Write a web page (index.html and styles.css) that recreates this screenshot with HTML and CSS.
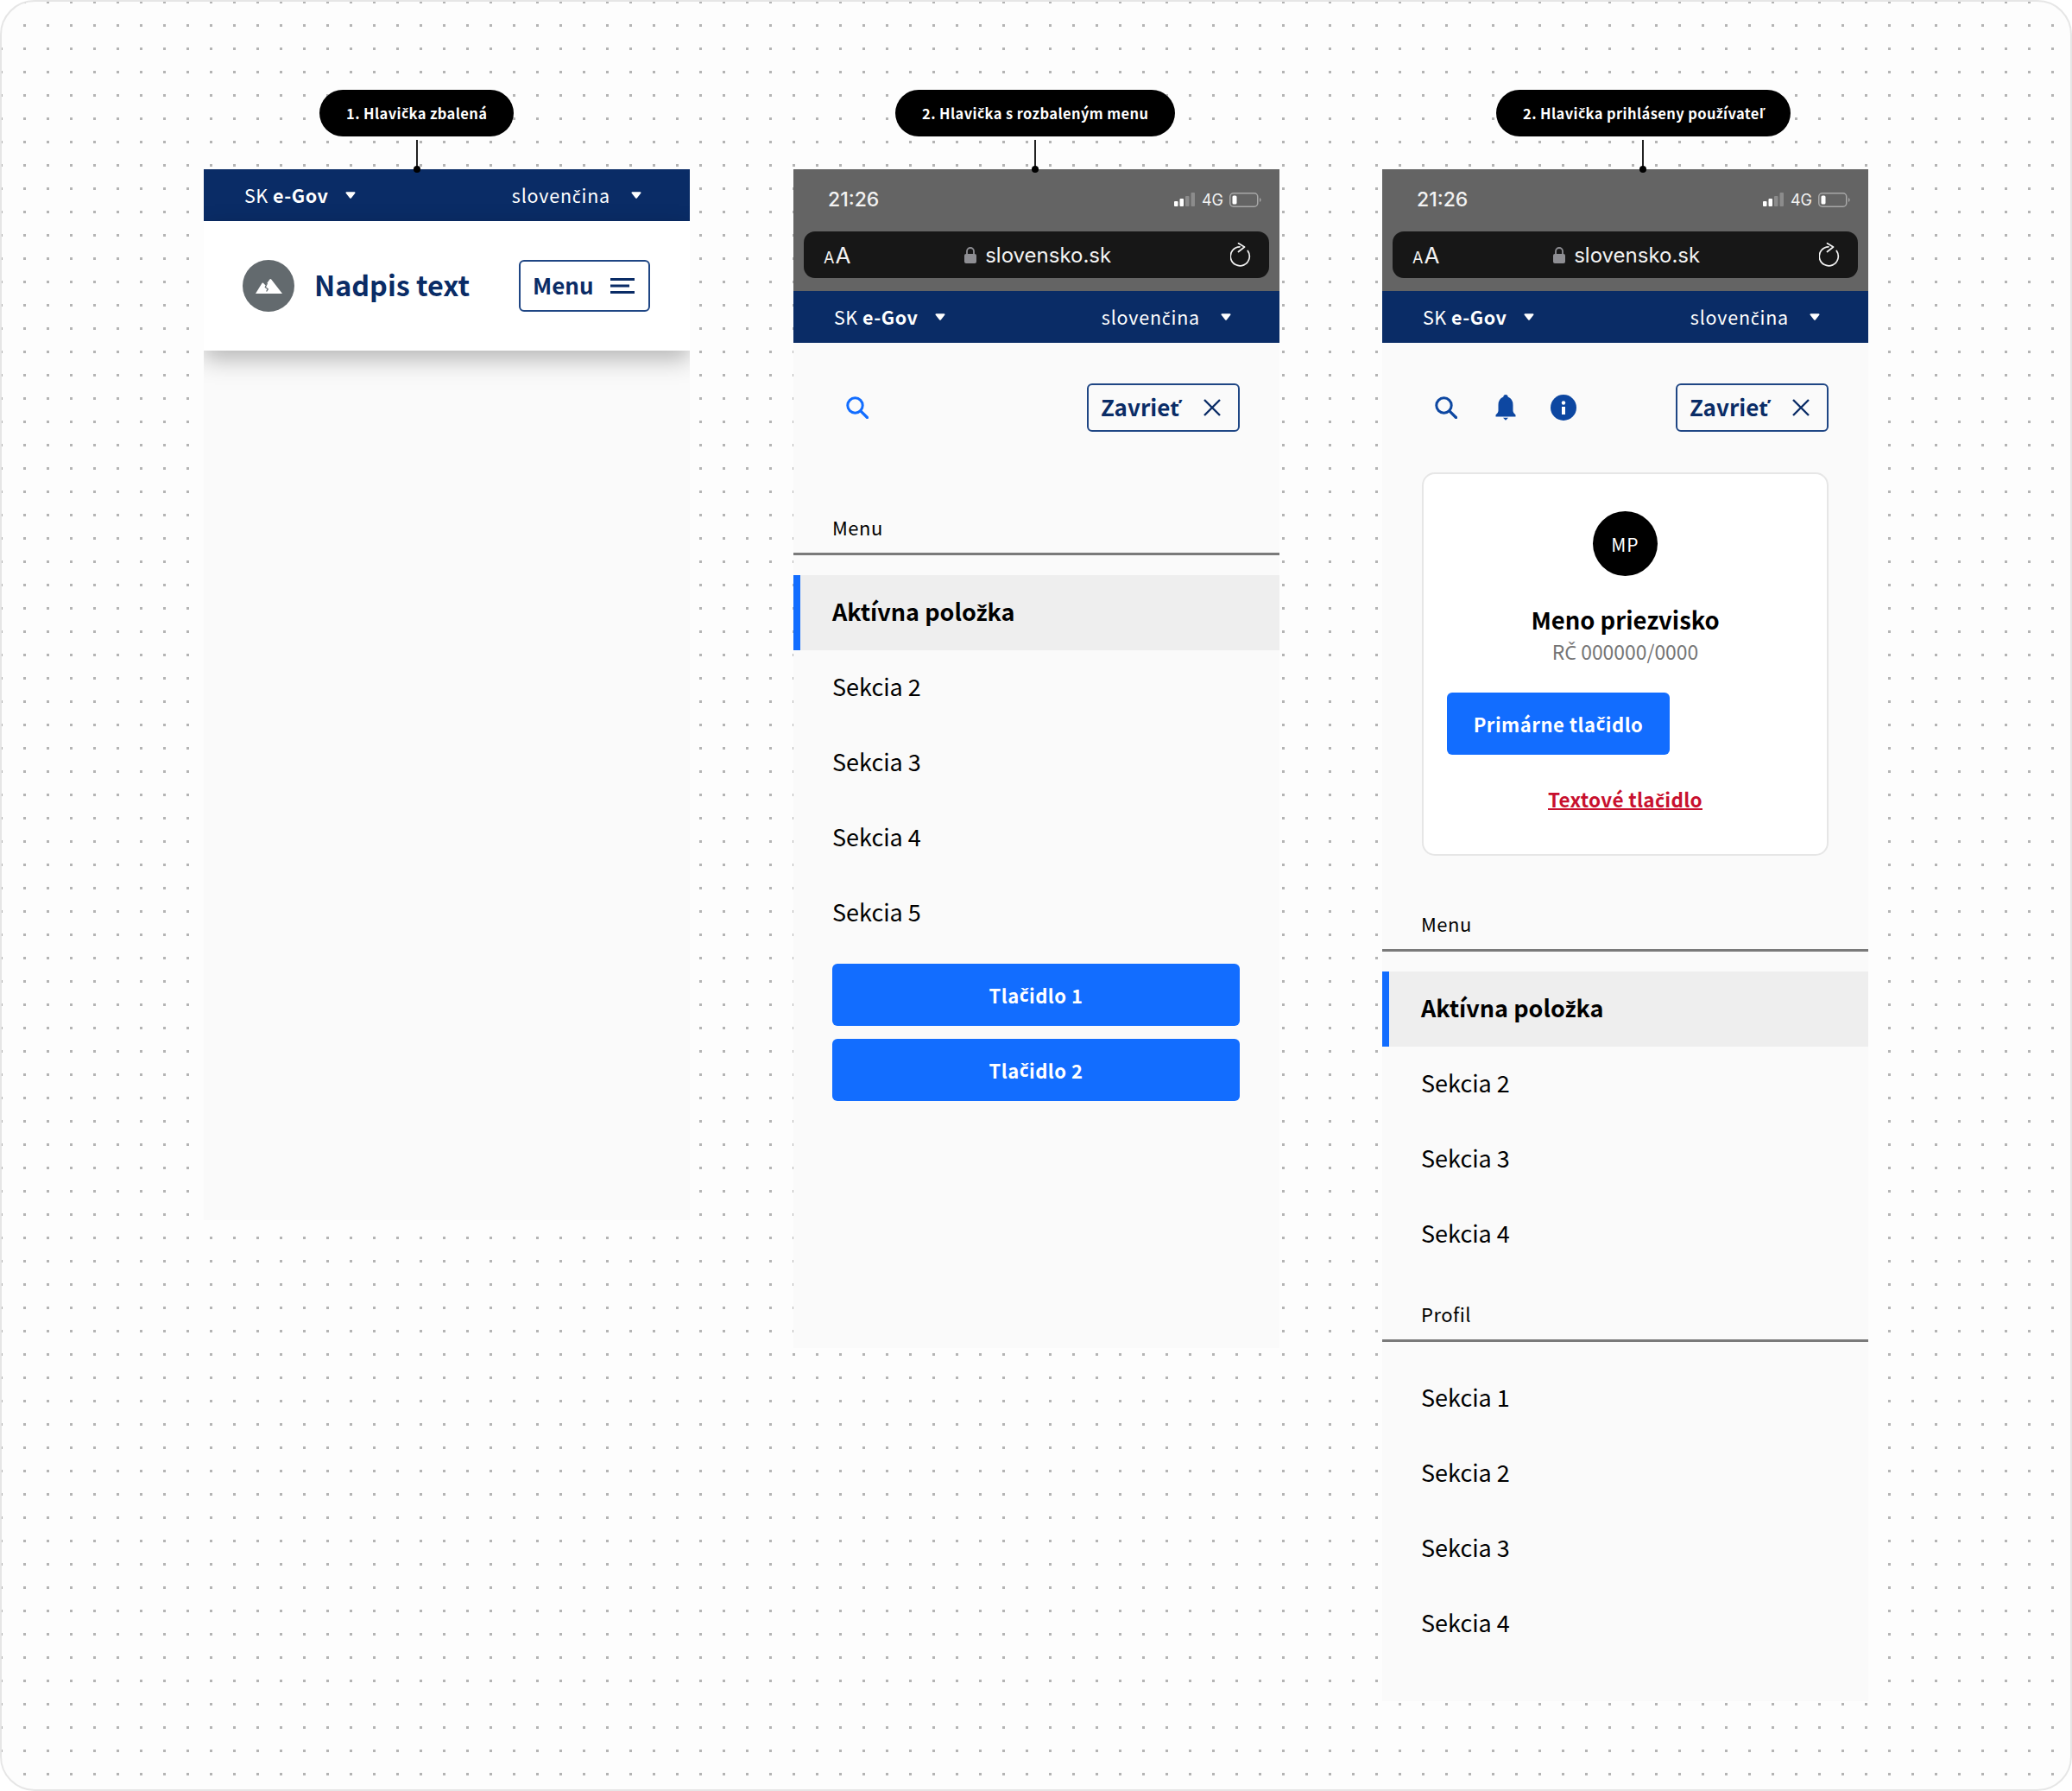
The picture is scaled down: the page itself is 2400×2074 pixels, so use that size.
FILE: index.html
```html
<!DOCTYPE html>
<html lang="sk">
<head>
  <meta charset="UTF-8">
  <title>Hlavička</title>
  <link rel="stylesheet" href="styles.css">
</head>
<body>
  <div class="board">

    <!-- 1. collapsed header -->
    <section class="column">
      <div class="callout callout-first">
        <div class="pill">1. Hlavi<span class="dia">č</span>ka zbalená</div>
        <div class="stem"></div>
      </div>
      <div class="panel panel-first">
        <div class="bar">
          <div class="bar-item"><span>SK <b>e-Gov</b></span><svg class="caret" viewBox="0 0 12 8"><path d="M1.500 1.200h9L6 6.800z" fill="#fff" stroke="#fff" stroke-width="2" stroke-linejoin="round"/></svg></div>
          <div class="bar-item"><span>sloven<span class="dia">č</span>ina</span><svg class="caret" viewBox="0 0 12 8"><path d="M1.500 1.200h9L6 6.800z" fill="#fff" stroke="#fff" stroke-width="2" stroke-linejoin="round"/></svg></div>
        </div>
        <header class="site-header">
          <div class="logo">
            <svg width="31" height="17" viewBox="0 0 31 17"><path d="M0 17 L7.600 4.800 Q8.300 4 9 4.800 L11.500 7.500 L16.400 .6 Q17.300 -.4 18.200 .6 L31 17 Z" fill="#fff"/><path d="M13.500 5 L11.300 9.500 L14.300 11.800 L12.600 14.500" fill="none" stroke="#636a6e" stroke-width="1.300"/></svg>
          </div>
          <div class="site-title">Nadpis text</div>
          <button class="outline-btn menu-btn"><span>Menu</span>
            <svg width="28" height="18" viewBox="0 0 28 18"><path d="M0 1.500h28M0 9h22M0 16.500h28" stroke="#0a2c66" stroke-width="3"/></svg>
          </button>
        </header>
      </div>
    </section>

    <!-- 2. expanded menu -->
    <section class="column">
      <div class="callout callout-second">
        <div class="pill">2. Hlavi<span class="dia">č</span>ka s rozbaleným menu</div>
        <div class="stem"></div>
      </div>
      <div class="panel panel-second">
        <div class="phone-top">
          <div class="status">
            <span class="time">21:26</span>
            <div class="status-right">
              <svg width="25" height="16" viewBox="0 0 25 16"><rect x="0" y="10" width="4.500" height="6" rx="1" fill="#fff"/><rect x="6.500" y="7" width="4.500" height="9" rx="1" fill="#fff"/><rect x="13" y="4" width="4.500" height="12" rx="1" fill="#8c8c8c"/><rect x="19.500" y="0" width="4.500" height="16" rx="1" fill="#8c8c8c"/></svg>
              <span class="net">4G</span>
              <svg width="37" height="17" viewBox="0 0 37 17"><rect x=".75" y=".75" width="32" height="15.500" rx="4" fill="none" stroke="#a8a8a8" stroke-width="1.500"/><rect x="3.500" y="3.500" width="5" height="10" rx="1.500" fill="#fff"/><path d="M35 6v5q1.600-.8 1.600-2.500T35 6z" fill="#a8a8a8"/></svg>
            </div>
          </div>
          <div class="urlbar">
            <span class="aa"><small>A</small>A</span>
            <div class="url">
              <svg width="14" height="19" viewBox="0 0 14 19"><path d="M3 9V5a4 4 0 0 1 8 0v4" fill="none" stroke="#8e8e93" stroke-width="1.800"/><rect y="8" width="14" height="11" rx="2" fill="#8e8e93"/></svg>
              <span>slovensko.sk</span>
            </div>
            <svg width="24" height="28" viewBox="0 0 24 28"><path d="M11 4.800A11 11 0 1 0 20.300 9.500" fill="none" stroke="#f2f2f2" stroke-width="1.700" stroke-linecap="round"/><path d="M9.500 .8 L16.500 5 L9.500 10.500" fill="none" stroke="#f2f2f2" stroke-width="1.700" stroke-linecap="round" stroke-linejoin="round"/></svg>
          </div>
        </div>
        <div class="bar">
          <div class="bar-item"><span>SK <b>e-Gov</b></span><svg class="caret" viewBox="0 0 12 8"><path d="M1.500 1.200h9L6 6.800z" fill="#fff" stroke="#fff" stroke-width="2" stroke-linejoin="round"/></svg></div>
          <div class="bar-item"><span>sloven<span class="dia">č</span>ina</span><svg class="caret" viewBox="0 0 12 8"><path d="M1.500 1.200h9L6 6.800z" fill="#fff" stroke="#fff" stroke-width="2" stroke-linejoin="round"/></svg></div>
        </div>
        <div class="toolbar">
          <div class="tool-icons">
            <svg class="tool-icon" width="26" height="26" viewBox="0 0 26 26"><circle cx="10.500" cy="10.500" r="8.700" fill="none" stroke="#126dff" stroke-width="3"/><path d="M16.800 16.800 24.500 24.500" stroke="#126dff" stroke-width="3.200" stroke-linecap="round"/></svg>
          </div>
          <button class="outline-btn close-btn"><span>Zavrie<span class="dia">ť</span></span>
            <svg width="20" height="20" viewBox="0 0 20 20"><path d="M1 1 19 19M19 1 1 19" stroke="#0a2c66" stroke-width="2.400"/></svg>
          </button>
        </div>
        <div class="nav-label nav-label-top">Menu</div>
        <ul class="nav-list">
          <li class="active">Aktívna polo<span class="dia">ž</span>ka</li>
          <li>Sekcia 2</li>
          <li>Sekcia 3</li>
          <li>Sekcia 4</li>
          <li>Sekcia 5</li>
        </ul>
        <div class="actions">
          <a class="primary-btn">Tla<span class="dia">č</span>idlo 1</a>
          <a class="primary-btn">Tla<span class="dia">č</span>idlo 2</a>
        </div>
      </div>
    </section>

    <!-- 3. signed in user -->
    <section class="column">
      <div class="callout callout-third">
        <div class="pill">2. Hlavi<span class="dia">č</span>ka prihláseny pou<span class="dia">ž</span>ívate<span class="dia">ľ</span></div>
        <div class="stem"></div>
      </div>
      <div class="panel panel-third">
        <div class="phone-top">
          <div class="status">
            <span class="time">21:26</span>
            <div class="status-right">
              <svg width="25" height="16" viewBox="0 0 25 16"><rect x="0" y="10" width="4.500" height="6" rx="1" fill="#fff"/><rect x="6.500" y="7" width="4.500" height="9" rx="1" fill="#fff"/><rect x="13" y="4" width="4.500" height="12" rx="1" fill="#8c8c8c"/><rect x="19.500" y="0" width="4.500" height="16" rx="1" fill="#8c8c8c"/></svg>
              <span class="net">4G</span>
              <svg width="37" height="17" viewBox="0 0 37 17"><rect x=".75" y=".75" width="32" height="15.500" rx="4" fill="none" stroke="#a8a8a8" stroke-width="1.500"/><rect x="3.500" y="3.500" width="5" height="10" rx="1.500" fill="#fff"/><path d="M35 6v5q1.600-.8 1.600-2.500T35 6z" fill="#a8a8a8"/></svg>
            </div>
          </div>
          <div class="urlbar">
            <span class="aa"><small>A</small>A</span>
            <div class="url">
              <svg width="14" height="19" viewBox="0 0 14 19"><path d="M3 9V5a4 4 0 0 1 8 0v4" fill="none" stroke="#8e8e93" stroke-width="1.800"/><rect y="8" width="14" height="11" rx="2" fill="#8e8e93"/></svg>
              <span>slovensko.sk</span>
            </div>
            <svg width="24" height="28" viewBox="0 0 24 28"><path d="M11 4.800A11 11 0 1 0 20.300 9.500" fill="none" stroke="#f2f2f2" stroke-width="1.700" stroke-linecap="round"/><path d="M9.500 .8 L16.500 5 L9.500 10.500" fill="none" stroke="#f2f2f2" stroke-width="1.700" stroke-linecap="round" stroke-linejoin="round"/></svg>
          </div>
        </div>
        <div class="bar">
          <div class="bar-item"><span>SK <b>e-Gov</b></span><svg class="caret" viewBox="0 0 12 8"><path d="M1.500 1.200h9L6 6.800z" fill="#fff" stroke="#fff" stroke-width="2" stroke-linejoin="round"/></svg></div>
          <div class="bar-item"><span>sloven<span class="dia">č</span>ina</span><svg class="caret" viewBox="0 0 12 8"><path d="M1.500 1.200h9L6 6.800z" fill="#fff" stroke="#fff" stroke-width="2" stroke-linejoin="round"/></svg></div>
        </div>
        <div class="toolbar">
          <div class="tool-icons">
            <svg class="tool-icon search-dark" width="26" height="26" viewBox="0 0 26 26"><circle cx="10.500" cy="10.500" r="8.700" fill="none" stroke="#0d47a1" stroke-width="3"/><path d="M16.800 16.800 24.500 24.500" stroke="#0d47a1" stroke-width="3.200" stroke-linecap="round"/></svg>
            <svg class="tool-icon" width="24" height="30" viewBox="0 0 24 30"><path d="M12 0a2.600 2.600 0 0 1 2.600 2.600Q20.500 5 20.500 12V19Q20.500 21 23.500 23.500V25.500H.5V23.500Q3.500 21 3.500 19V12Q3.500 5 9.400 2.600A2.600 2.600 0 0 1 12 0Z" fill="#0d47a1"/><path d="M9 26.800H15L12 29.800Z" fill="#0d47a1"/></svg>
            <svg class="tool-icon" width="30" height="30" viewBox="0 0 30 30"><circle cx="15" cy="15" r="15" fill="#0d47a1"/><circle cx="15" cy="9.500" r="2.200" fill="#fff"/><path d="M15 14v9" stroke="#fff" stroke-width="4"/></svg>
          </div>
          <button class="outline-btn close-btn"><span>Zavrie<span class="dia">ť</span></span>
            <svg width="20" height="20" viewBox="0 0 20 20"><path d="M1 1 19 19M19 1 1 19" stroke="#0a2c66" stroke-width="2.400"/></svg>
          </button>
        </div>
        <div class="profile-card">
          <div class="avatar">MP</div>
          <div class="profile-name">Meno priezvisko</div>
          <div class="profile-id">R<span class="dia">Č</span> 000000/0000</div>
          <a class="primary-btn profile-btn">Primárne tla<span class="dia">č</span>idlo</a>
          <a class="text-btn">Textové tla<span class="dia">č</span>idlo</a>
        </div>
        <div class="nav-label nav-label-card">Menu</div>
        <ul class="nav-list">
          <li class="active">Aktívna polo<span class="dia">ž</span>ka</li>
          <li>Sekcia 2</li>
          <li>Sekcia 3</li>
          <li>Sekcia 4</li>
        </ul>
        <div class="nav-label nav-label-profile">Profil</div>
        <ul class="nav-list">
          <li>Sekcia 1</li>
          <li>Sekcia 2</li>
          <li>Sekcia 3</li>
          <li>Sekcia 4</li>
        </ul>
      </div>
    </section>

  </div>
</body>
</html>
```

FILE: styles.css
```css
* {
  box-sizing: border-box;
}
body {
  margin: 0;
  font-family: "Noto Sans CJK SC", "Noto Sans", sans-serif;
  color: #000;
}
/* the CJK face has no č ž ť ľ of its own */
.dia {
  font-family: "Noto Sans", sans-serif;
  font-size: 0.95em;
  line-height: 0;
}
.board {
  width: 2400px;
  height: 2074px;
  padding: 102px 0 0 234px;
  display: flex;
  gap: 120px;
  align-items: flex-start;
  border: 2px solid #e6e6e6;
  border-radius: 40px;
  background-color: #fdfdfd;
  background-image: radial-gradient(circle, #b4b4b4 1.5px, transparent 2px);
  background-size: 27px 27px;
  background-position: 13px 14px;
  overflow: hidden;
}
.column {
  width: 563px;
  flex-shrink: 0;
}
.column:last-child {
  margin-left: -1px;
}

/* callouts */
.callout {
  width: fit-content;
  display: flex;
  flex-direction: column;
  align-items: center;
}
.callout-first {
  margin-left: 134px;
}
.callout-second {
  margin-left: 118px;
}
.callout-third {
  margin-left: 132px;
}
.pill {
  height: 54px;
  padding: 0 31px;
  display: flex;
  align-items: center;
  border-radius: 27px;
  background: #000;
  color: #fff;
  font-size: 16.5px;
  font-weight: 700;
  letter-spacing: 0.4px;
  white-space: pre;
}
.stem {
  position: relative;
  z-index: 1;
  width: 2px;
  height: 34px;
  margin-top: 4px;
  background: #222;
}
.stem::after {
  content: "";
  position: absolute;
  left: -3px;
  bottom: -4px;
  width: 8px;
  height: 8px;
  border-radius: 50%;
  background: #000;
}

/* panels */
.panel {
  background: #fafafa;
  overflow: hidden;
}
.panel-first {
  height: 1217px;
}
.panel-second {
  height: 1365px;
}
.panel-third {
  height: 1774px;
}

/* blue government bar */
.bar {
  height: 60px;
  padding: 0 56px 0 47px;
  display: flex;
  align-items: center;
  justify-content: space-between;
  background: #0a2c66;
  color: #fff;
  font-size: 21.5px;
  letter-spacing: 0.5px;
}
.bar-item {
  display: flex;
  align-items: center;
  gap: 20px;
}
.bar-item:last-child {
  gap: 24px;
  letter-spacing: 0.8px;
}
.bar-item > span {
  margin-top: -2px;
}
.bar-item b {
  font-weight: 700;
}
.caret {
  width: 12px;
  height: 8px;
}

/* collapsed header */
.site-header {
  position: relative;
  height: 150px;
  padding: 0 46px 0 45px;
  display: flex;
  align-items: center;
  background: #fff;
  box-shadow: 0 10px 26px rgba(0, 0, 0, 0.28);
}
.logo {
  width: 60px;
  height: 60px;
  margin-right: 23px;
  display: flex;
  align-items: center;
  justify-content: center;
  border-radius: 50%;
  background: #636a6e;
}
.site-title {
  margin-top: -4px;
  font-size: 32.3px;
  font-weight: 700;
  color: #0a2c66;
}
.outline-btn {
  display: flex;
  align-items: center;
  justify-content: space-between;
  padding: 0 16px 0 14px;
  margin: 0 0 0 auto;
  border: 2px solid #1f4684;
  border-radius: 6px;
  background: #fff;
  color: #0a2c66;
  font-family: inherit;
  font-size: 26px;
  font-weight: 700;
}
.outline-btn > span {
  margin-top: -3px;
}
.menu-btn {
  width: 152px;
  height: 60px;
}

/* phone chrome */
.phone-top {
  height: 141px;
  padding: 0 12px;
  background: #646464;
}
.status {
  height: 72px;
  padding: 0 9px 2px 28px;
  display: flex;
  align-items: center;
  justify-content: space-between;
  color: #f2f2f2;
  font-family: "Inter", "Liberation Sans", sans-serif;
}
.time {
  font-size: 23px;
  font-weight: 500;
}
.status-right {
  display: flex;
  align-items: center;
  gap: 7px;
}
.net {
  font-size: 18px;
}
.urlbar {
  position: relative;
  height: 54px;
  padding: 0 21px 0 23px;
  display: flex;
  align-items: center;
  justify-content: space-between;
  border-radius: 13px;
  background: #171717;
  color: #f2f2f2;
  font-family: "Inter", "Liberation Sans", sans-serif;
}
.aa {
  font-size: 26px;
}
.aa small {
  font-size: 18px;
  margin-right: 1px;
}
.url {
  display: flex;
  align-items: center;
  gap: 10px;
  margin-right: 6px;
  font-size: 24px;
}

/* toolbar under the bar */
.toolbar {
  height: 103px;
  padding: 47px 46px 0 61px;
  display: flex;
  align-items: center;
}
.tool-icons {
  display: flex;
  align-items: center;
  gap: 40px;
}
.search-dark {
  margin-right: 4px;
}
.close-btn {
  width: 177px;
  height: 56px;
  padding-right: 20px;
  background: transparent;
}

/* navigation */
.nav-label {
  height: 46px;
  padding: 0 0 0 45px;
  line-height: 26px;
  border-bottom: 3px solid #7a7a7a;
  font-size: 22px;
  letter-spacing: 0.5px;
}
.nav-label-top {
  margin-top: 97px;
}
.nav-label-card {
  margin-top: 65px;
}
.nav-label-profile {
  margin-top: 35px;
}
.nav-list {
  list-style: none;
  margin: 23px 0 0;
  padding: 0;
}
.nav-label-profile + .nav-list {
  margin-top: 22px;
}
.nav-list li {
  height: 87px;
  padding-left: 45px;
  line-height: 84px;
  font-size: 27px;
}
.nav-list .active {
  border-left: 8px solid #126dff;
  padding-left: 37px;
  background: #eeeeee;
  font-weight: 700;
}
.actions {
  margin-top: 15px;
  padding: 0 46px 0 45px;
  display: flex;
  flex-direction: column;
  gap: 15px;
}
.primary-btn {
  height: 72px;
  padding-bottom: 1px;
  display: flex;
  align-items: center;
  justify-content: center;
  border-radius: 6px;
  background: #126dff;
  color: #fff;
  font-size: 22px;
  font-weight: 700;
  letter-spacing: 0.5px;
  white-space: pre;
}

/* profile card */
.profile-card {
  width: 471px;
  height: 444px;
  margin: 47px 0 0 46px;
  padding: 43px 27px 0;
  display: flex;
  flex-direction: column;
  align-items: center;
  border: 2px solid #e6e6e6;
  border-radius: 15px;
  background: #fff;
}
.avatar {
  width: 75px;
  height: 75px;
  display: flex;
  align-items: center;
  justify-content: center;
  border-radius: 50%;
  background: #000;
  color: #fff;
  font-size: 21px;
  letter-spacing: 1px;
}
.profile-name {
  margin-top: 30px;
  line-height: 40px;
  font-size: 27.4px;
  font-weight: 700;
}
.profile-id {
  margin-top: 2px;
  line-height: 30px;
  font-size: 22.9px;
  color: #757575;
}
.profile-btn {
  width: 258px;
  margin-top: 33px;
  align-self: flex-start;
}
.text-btn {
  margin-top: 36px;
  line-height: 30px;
  font-size: 22.5px;
  font-weight: 700;
  color: #c8102e;
  text-decoration: underline;
  text-decoration-thickness: 2px;
  letter-spacing: 0.3px;
}
```
